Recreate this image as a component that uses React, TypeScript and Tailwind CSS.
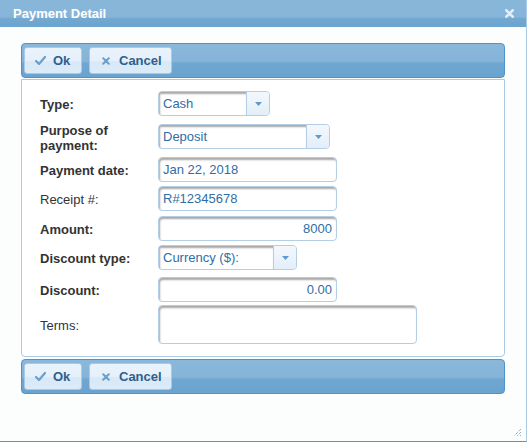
import React from "react";

const font = { fontFamily: '"Liberation Sans", Arial, sans-serif' };

function CheckIcon() {
  return (
    <svg width="11" height="9" viewBox="0 0 11 9">
      <path d="M1 5 L4 8 L10 1" fill="none" stroke="#6b9fcc" strokeWidth="2.2" strokeLinecap="round" strokeLinejoin="round" />
    </svg>
  );
}

function XIcon() {
  return (
    <svg width="8" height="8" viewBox="0 0 8 8">
      <path d="M1.2 1.2 L6.8 6.8 M6.8 1.2 L1.2 6.8" stroke="#6b9fcc" strokeWidth="2" strokeLinecap="round" />
    </svg>
  );
}

function Toolbar() {
  return (
    <div className="flex h-[35px] items-center gap-[7px] rounded-[4px] border border-[#4d93cc] bg-[linear-gradient(#8ab8db_0%,#86b4d8_52%,#6fa7d1_58%,#6aa3cf_100%)] px-[2px]">
      <button className="flex h-[27px] w-[58px] items-center gap-[7px] rounded-[3px] border border-[#a9c9e5] bg-[linear-gradient(#eaf3fc_0%,#e6f0fa_50%,#d9e8f6_55%,#dcebf8_100%)] pl-[10px] text-[13px] font-bold text-[#2f5f8c]">
        <CheckIcon />
        <span>Ok</span>
      </button>
      <button className="flex h-[27px] w-[83px] items-center gap-[9px] rounded-[3px] border border-[#a9c9e5] bg-[linear-gradient(#eaf3fc_0%,#e6f0fa_50%,#d9e8f6_55%,#dcebf8_100%)] pl-[12px] text-[13px] font-bold text-[#2f5f8c]">
        <XIcon />
        <span>Cancel</span>
      </button>
    </div>
  );
}

function Select({ value, width }: { value: string; width: string }) {
  return (
    <div className={`flex h-[25px] ${width} overflow-hidden rounded-[4px] border border-[#b3cfe8] bg-white`}>
      <div className="flex flex-1 items-center pl-[4px] text-[13px] text-[#2f6ea6] shadow-[inset_1px_2px_2px_rgba(0,0,0,0.35)]">
        {value}
      </div>
      <div className="flex w-[23px] items-center justify-center border-l border-[#b3cfe8] bg-[linear-gradient(#f4f8fc,#e3eef9)]">
        <svg width="7" height="4" viewBox="0 0 7 4">
          <path d="M0 0 L7 0 L3.5 4 Z" fill="#5c9ad0" />
        </svg>
      </div>
    </div>
  );
}

function Input({ value, width, right }: { value: string; width: string; right?: boolean }) {
  return (
    <div
      className={`flex h-[25px] ${width} items-center rounded-[4px] border border-[#b3cfe8] bg-white px-[4px] text-[13px] text-[#2f6ea6] shadow-[inset_1px_2px_2px_rgba(0,0,0,0.35)] ${right ? "justify-end" : ""}`}
    >
      {value}
    </div>
  );
}

function Row({ label, bold = true, children, mt, h = "h-[25px]" }: { label: React.ReactNode; bold?: boolean; children: React.ReactNode; mt: string; h?: string }) {
  return (
    <div className={`flex ${h} items-center ${mt}`}>
      <div className={`w-[118px] shrink-0 pt-[2px] text-[13px] leading-[15px] text-[#333333] ${bold ? "font-bold" : ""}`}>{label}</div>
      {children}
    </div>
  );
}

export default function App() {
  return (
    <div className="h-[443px] w-[527px] bg-white" style={font}>
      <div className="flex h-[442px] w-[527px] flex-col border-b border-r border-b-[#888888] border-r-[#a9cbe6] bg-[#fcfdfd]">
        <div className="flex h-[27px] items-center justify-between bg-[linear-gradient(#89b7da_0%,#86b5d9_62%,#70a8d1_70%,#6ca5cf_100%)] pl-[13px] pr-[12px]">
          <span className="text-[13px] font-bold text-white">Payment Detail</span>
          <svg width="9" height="9" viewBox="0 0 9 9">
            <path d="M1.3 1.3 L7.7 7.7 M7.7 1.3 L1.3 7.7" stroke="#e4eef7" strokeWidth="2.6" strokeLinecap="round" />
          </svg>
        </div>
        <div className="relative flex flex-1 flex-col pl-[21px] pr-[21px] pt-[16px]">
          <Toolbar />
          <div className="mt-[1px] flex h-[278px] flex-col rounded-b-[4px] border border-[#a9cbe6] bg-white pl-[18px] pt-[11px]">
            <Row label="Type:" mt="mt-0">
              <Select value="Cash" width="w-[112px]" />
            </Row>
            <Row label={<>Purpose of<br />payment:</>} mt="mt-[8px]">
              <Select value="Deposit" width="w-[172px]" />
            </Row>
            <Row label="Payment date:" mt="mt-[8px]">
              <Input value="Jan 22, 2018" width="w-[179px]" />
            </Row>
            <Row label="Receipt #:" bold={false} mt="mt-[4px]">
              <Input value="R#12345678" width="w-[179px]" />
            </Row>
            <Row label="Amount:" mt="mt-[5px]">
              <Input value="8000" width="w-[179px]" right />
            </Row>
            <Row label="Discount type:" mt="mt-[4px]">
              <Select value="Currency ($):" width="w-[139px]" />
            </Row>
            <Row label="Discount:" mt="mt-[7px]">
              <Input value="0.00" width="w-[179px]" right />
            </Row>
            <Row label="Terms:" bold={false} mt="mt-[3px]" h="h-[39px]">
              <div className="h-[39px] w-[259px] rounded-[4px] border border-[#b3cfe8] bg-white shadow-[inset_1px_2px_2px_rgba(0,0,0,0.35)]" />
            </Row>
          </div>
          <div className="mt-[2px]">
            <Toolbar />
          </div>
          <svg className="absolute bottom-[4px] right-[4px]" width="9" height="9" viewBox="0 0 9 9">
            <path d="M8 1 L1 8 M8 4 L4 8 M8 7 L7 8" stroke="#5b93c9" strokeWidth="1" strokeDasharray="1 1" />
          </svg>
        </div>
      </div>
    </div>
  );
}
